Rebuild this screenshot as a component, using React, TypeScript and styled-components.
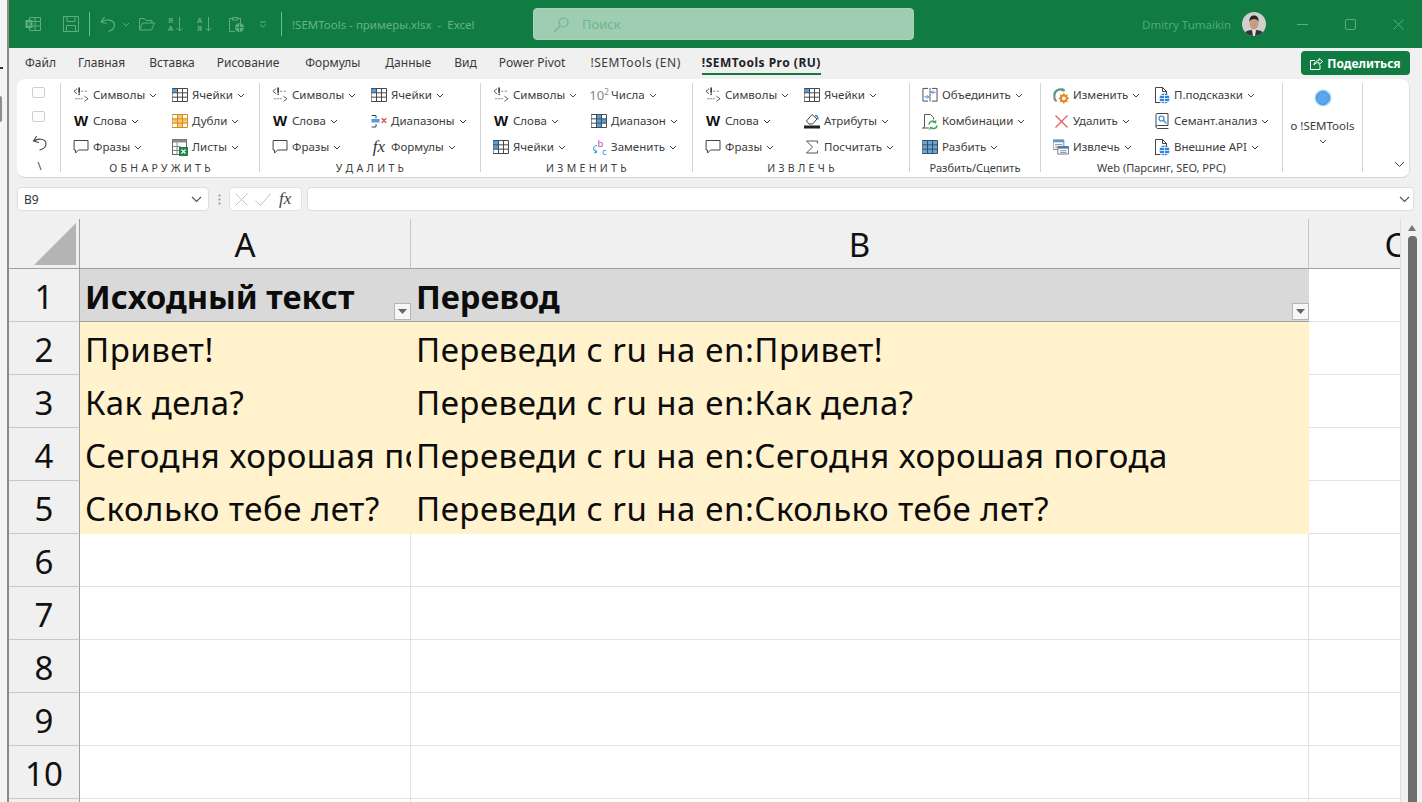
import React from "react";
import styled, { createGlobalStyle } from "styled-components";

const FONT = `"Noto Sans", "Open Sans", "Liberation Sans", sans-serif`;

const Global = createGlobalStyle`
  html, body { margin: 0; padding: 0; background: #f0f0f0; overflow: hidden; }
  * { box-sizing: border-box; }
`;

const Page = styled.div`
  width: 1422px; height: 802px; display: flex; overflow: hidden;
  font-family: ${FONT}; background: #f0f0f0;
`;
const DesktopEdge = styled.div`
  width: 9px; flex: none; background: #f3f3f3; border-right: 2px solid #8a8a8a;
  display: flex; flex-direction: column; align-items: flex-start; padding-top: 67px; overflow: hidden;
`;
const EdgeMark = styled.span`
  width: 3px; height: 2px; background: #333;
`;
const EdgeScroll = styled.span`
  width: 2px; height: 26px; margin-top: 27px; background: #8e8e8e; border-radius: 0 2px 2px 0;
`;
const Window = styled.div`
  flex: 1; min-width: 0; display: flex; flex-direction: column; background: #f0f0f0;
`;
const TitleBar = styled.header`
  height: 48px; flex: none; background: #107c41; display: flex; align-items: center;
  position: relative; padding-left: 16px; color: #5cb184;
`;
const Qat = styled.span<{ $ml?: number }>`
  display: flex; align-items: center; margin-left: ${p => p.$ml ?? 0}px;
`;
const QatSep = styled.span<{ $ml: number }>`
  width: 1px; height: 24px; background: #6dbb92; margin-left: ${p => p.$ml}px;
`;
const FileName = styled.span`
  margin-left: 10px; font-size: 11.5px; color: #62b389; white-space: nowrap; width: 241px;
`;
const SearchBox = styled.div`
  width: 381px; height: 32px; background: #9fcdb2; border: 1px solid #a9d2ba; border-radius: 4px;
  display: flex; align-items: center; padding-left: 20px; gap: 13px; color: #6fb48e; font-size: 13px;
`;
const UserName = styled.span`
  margin-left: 228px; width: 100px; font-size: 11.5px; color: #4fab79; white-space: nowrap;
`;
const WinButtons = styled.div`
  display: flex; align-items: center; margin-left: 31px; gap: 37px;
`;
const TabBar = styled.nav`
  height: 30px; flex: none; display: flex; align-items: flex-start; position: relative; padding-left: 16px;
`;
const Tab = styled.span<{ $active?: boolean; $ls?: number; $mr: number }>`
  height: 27px; margin-right: ${p => p.$mr}px;
  font-size: 12px; line-height: 30px; white-space: nowrap; letter-spacing: ${p => p.$ls ?? 0}px;
  color: ${p => p.$active ? "#222" : "#3a3a3a"}; font-weight: ${p => p.$active ? 700 : 400};
  border-bottom: ${p => p.$active ? "2px solid #107c41" : "none"};
`;
const Share = styled.button`
  margin-left: auto; margin-right: 12px; margin-top: 3px; width: 109px; height: 24px; border: 0; border-radius: 4px;
  background: #107c41; color: #fff; font: 700 12px ${FONT}; display: flex; align-items: center; justify-content: center; gap: 4px;
  padding: 0;
`;
const Ribbon = styled.section`
  height: 99px; flex: none; margin: 1px 12px 0 8px; background: #fff; border-radius: 8px;
  border-bottom: 1px solid #d2d2d2; border-right: 1px solid #e0e0e0; display: flex; position: relative; padding-top: 4px;
`;
const Group = styled.div<{ $w: number }>`
  width: ${p => p.$w}px; height: 89px; flex: none; border-right: 1px solid #d4d4d4; display: flex; flex-direction: column;
`;
const FirstCol = styled.div`
  height: 89px; width: 44px; flex: none; border-right: 1px solid #d4d4d4; display: flex; flex-direction: column; align-items: center; padding: 4px 1px 0 0;
`;
const Check = styled.span`
  width: 13px; height: 13px; border: 1px solid #cfcfcf; border-radius: 2px; margin: 0 0 13px;
  background: #fdfdfd;
`;
const UndoWrap = styled.span`
  display: flex; margin-left: 4px;
`;
const Slash = styled.span`
  font-size: 11px; line-height: 12px; color: #444; margin: 8px 0 0 3px;
`;
const Cols = styled.div<{ $cols: string }>`
  display: grid; grid-template-columns: ${p => p.$cols}; padding-left: 12px; height: 76px;
`;
const Col = styled.div`
  display: flex; flex-direction: column; gap: 2px;
`;
const Item = styled.div`
  height: 24px; display: flex; align-items: center; white-space: nowrap;
`;
const IconSlot = styled.span`
  width: 16px; height: 16px; flex: none; margin-right: 4px; display: flex; align-items: center; justify-content: center;
`;
const WordIcon = styled.span`
  font: 900 15px "Liberation Sans", sans-serif; color: #111; line-height: 16px;
`;
const FxIcon = styled.span`
  font: italic 400 17px "Liberation Serif", serif; color: #333; line-height: 16px;
`;
const PowerIcon = styled.span`
  font-size: 13px; color: #888; line-height: 16px; white-space: nowrap;
  sup { font-size: 8px; vertical-align: 5px; line-height: 0; }
`;
const ItemLabel = styled.span`
  font-size: 11.5px; color: #3c3c3c; line-height: 16px;
`;
const CaretSvg = styled.svg`
  margin-left: 4px; flex: none;
`;
const GroupLabel = styled.div<{ $spaced?: boolean }>`
  text-align: center; font-size: ${p => p.$spaced ? 10.5 : 11}px; line-height: 12px; color: #3c3c3c; margin-top: 3px; white-space: nowrap;
  letter-spacing: ${p => p.$spaced ? "0.3px" : "0"};
`;
const AboutGroup = styled.div`
  width: 80px; height: 89px; flex: none; border-right: 1px solid #d4d4d4; display: flex; flex-direction: column; align-items: center; padding-top: 6px;
`;
const AboutLabel = styled.span`
  font-size: 11.5px; color: #3c3c3c; margin-top: 11px; line-height: 16px; white-space: nowrap;
`;
const AboutCaret = styled.span`
  display: flex; margin: 5px 4px 0 0;
`;
const Collapse = styled.span`
  position: absolute; right: 4px; bottom: 9px; display: flex;
`;
const FormulaRow = styled.div`
  height: 24px; flex: none; margin-top: 9px; display: flex; align-items: stretch; padding-left: 8px; padding-right: 8px;
`;
const NameBox = styled.div`
  width: 192px; background: #fff; border: 1px solid #dedede; border-radius: 4px; display: flex; align-items: center; justify-content: space-between;
  padding: 0 6px 0 6px; font-size: 12px; color: #333;
`;
const Dots = styled.span`
  width: 20px; flex: none; display: flex; align-items: center; justify-content: center;
`;
const FxBox = styled.div`
  width: 73px; flex: none; background: #fff; border: 1px solid #e2e2e2; border-radius: 4px; display: flex; align-items: center; gap: 7px; padding-left: 5px;
`;
const FxBoxLabel = styled.span`
  font: italic 400 17px "Liberation Serif", serif; color: #444; margin-left: 1px;
`;
const FormulaInput = styled.div`
  flex: 1; margin-left: 5px; background: #fff; border: 1px solid #dedede; border-radius: 4px; display: flex; align-items: center; justify-content: flex-end; padding-right: 3px;
`;
const SheetArea = styled.main`
  flex: 1; min-height: 0; margin-top: 8px; display: flex; overflow: hidden;
`;
const Sheet = styled.div`
  width: 1391px; flex: none; overflow: hidden; display: grid;
  grid-template-columns: 71px 331px 898px 172px; grid-auto-rows: 53px; grid-template-rows: 50px;
  align-content: start; background: #fff; font-family: ${FONT};
`;
const Corner = styled.div`
  background: #f0f0f0; border-right: 1px solid #a0a0a0; border-bottom: 1px solid #a0a0a0;
  display: flex; align-items: flex-end; justify-content: flex-end; padding: 0 3px 3px 0;
`;
const ColHead = styled.div<{ $last?: boolean }>`
  background: #f0f0f0; border-bottom: 1px solid #a0a0a0; border-right: ${p => p.$last ? "none" : "1px solid #c6c6c6"};
  display: flex; align-items: center; justify-content: center; font-size: 33px; color: #111; padding-top: 1px;
`;
const RowHead = styled.div`
  background: #f0f0f0; border-right: 1px solid #a0a0a0; border-bottom: 1px solid #c8c8c8;
  display: flex; align-items: center; justify-content: center; font-size: 33px; color: #111; padding-top: 2px;
`;
const Cell = styled.div<{ $kind: "head" | "data" | "empty"; $last?: boolean }>`
  position: relative; overflow: hidden; white-space: nowrap; padding: 3px 0 0 5px; display: flex; align-items: center;
  font-size: ${p => p.$kind === "head" ? 32.6 : 33}px; color: #0c0c0c;
  letter-spacing: ${p => p.$kind === "head" ? 0 : 0.48}px;
  font-weight: ${p => p.$kind === "head" ? 700 : 400};
  background: ${p => p.$kind === "head" ? "#d9d9d9" : p.$kind === "data" ? "#fff2cc" : "#fff"};
  border-right: ${p => p.$kind === "empty" ? "1px solid #e2e2e2" : "none"};
  border-bottom: ${p => p.$kind === "head" ? "1px solid #a0a0a0" : p.$kind === "data" ? "1px solid #fff2cc" : "1px solid #e2e2e2"};
`;
const FilterBtn = styled.span`
  position: absolute; right: 0; bottom: 1px; width: 17px; height: 17px; background: #f6f6f6; border: 1px solid #b5b5b5;
  display: flex; align-items: center; justify-content: center;
`;
const ScrollBar = styled.aside`
  width: 22px; flex: none; background: #f1f1f1; border-left: 1px solid #e0e0e0; display: flex; flex-direction: column; align-items: center; padding: 6px 0 0 1px;
`;
const ScrollArrow = styled.span`
  width: 0; height: 0; border-left: 4.5px solid transparent; border-right: 4.5px solid transparent; border-bottom: 6px solid #777;
`;
const ScrollThumb = styled.span`
  width: 9px; flex: 1; margin-top: 5px; background: #6e6e6e; border-radius: 4px 4px 0 0;
`;

const ln = { fill: "none", strokeLinecap: "round" as const, strokeLinejoin: "round" as const };

const GridIcon = ({ fill = "#4ba0e8", cells, stroke = "#4a4a4a" }: { fill?: string; cells: [number, number][]; stroke?: string }) => (
  <svg width="16" height="16" viewBox="0 0 16 16">
    {cells.map(([c, r]) => (
      <rect key={`${c}${r}`} x={0.5 + c * 5} y={1.5 + r * 4.33} width="5" height="4.33" fill={fill} />
    ))}
    <path d="M.5 1.5h15v13H.5zM5.5 1.5v13M10.5 1.5v13M.5 5.83h15M.5 10.17h15" {...ln} stroke={stroke} strokeWidth="1" />
  </svg>
);
const Symbols = () => (
  <svg width="17" height="16" viewBox="0 0 17 16" {...ln} stroke="#555" strokeWidth="1">
    <path d="M4 1.500 1 4l3 2.500" />
    <path d="M6.500 .5v4.500" strokeWidth="1.700" stroke="#333" />
    <path d="M6.500 7v.6" strokeWidth="1.500" stroke="#333" />
    <path d="M9 4h2.500M13 4h2M2.500 12h1.500M5.500 12h1.500M8.500 12h1.500" stroke="#888" strokeDasharray="1.500 1" />
    <path d="m12.500 9.500 3.500 2.500-3.500 2.500" />
  </svg>
);
const Bubble = () => (
  <svg width="16" height="16" viewBox="0 0 16 16" {...ln} stroke="#444" strokeWidth="1">
    <path d="M1.500 1.500h13.500v9.500H5.500l-3 3v-3h-1z" />
  </svg>
);
const Sheets = () => (
  <svg width="16" height="17" viewBox="0 0 16 17">
    <rect x=".5" y=".5" width="14" height="15" fill="#fff" stroke="#666" />
    <rect x=".5" y=".5" width="14" height="3" fill="#8a8a8a" />
    <path d="M.5 7.500h8M.5 11.500h8M5 3.500v12" stroke="#888" />
    <rect x="7" y="8" width="9" height="9" fill="#1e8449" />
    <path d="m9.500 10.500 4 4M13.500 10.500l-4 4" stroke="#fff" strokeWidth="1.200" />
  </svg>
);
const Ranges = () => (
  <svg width="16" height="16" viewBox="0 0 16 16" {...ln}>
    <path d="M1 2.500h4v2.500M1 14h4v-2.500" stroke="#444" />
    <rect x=".5" y="6" width="8" height="3.500" fill="#4ba0e8" />
    <path d="m11 5.500 4 4M15 5.500l-4 4" stroke="#e04a4a" strokeWidth="1.200" />
  </svg>
);
const Replace = () => (
  <svg width="16" height="18" viewBox="0 0 16 18">
    <text x="6.500" y="8.500" fontSize="9.500" fontFamily="Noto Sans" fill="#b14fc5">b</text>
    <text x="11" y="16.500" fontSize="9.500" fontFamily="Noto Sans" fill="#2f9ad6">c</text>
    <path d="M6 7.500C2 7.500 1 12 5.500 14M4 11.500l2 2.500-3 1" fill="none" stroke="#2f9ad6" />
  </svg>
);
const Bucket = () => (
  <svg width="16" height="16" viewBox="0 0 16 16">
    <path d="M2.500 8 8 1.500l5 4.500-4.500 5H5z" fill="#fff" stroke="#444" />
    <path d="M11 2.500c2 0 3 1.500 3 4" fill="none" stroke="#2f7fd0" strokeWidth="1.300" />
    <rect x="0" y="12.500" width="16" height="3" fill="#222" />
  </svg>
);
const Sigma = () => (
  <svg width="14" height="14" viewBox="0 0 14 14" {...ln} stroke="#555" strokeWidth="1">
    <path d="M12.500 3V1H1.500l6 6-6 6h11v-2" />
  </svg>
);
const Merge = () => (
  <svg width="17" height="16" viewBox="0 0 17 16" {...ln}>
    <path d="M6 1H1v13.500h5M11 1h5v13.500h-5" stroke="#444" />
    <path d="M8.500 1v13.500" stroke="#444" strokeDasharray="2 1" />
    <path d="M14 5H10M11.500 3.500 10 5l1.500 1.500M3 10h4M5.500 8.500 7 10l-1.500 1.500" stroke="#2f86d6" />
  </svg>
);
const Combos = () => (
  <svg width="16" height="17" viewBox="0 0 16 17" {...ln}>
    <path d="M2.500 13V1.500h6l3 3V6M2.500 13.500c0 1.500-1 1.500-2 1.500h6" stroke="#555" fill="none" />
    <path d="M7 11c.5-3 4.500-4 6.500-1.500M15 13c-.5 2.500-4.500 3.500-6.500 1.500" stroke="#3aa55c" strokeWidth="1.500" fill="none" />
    <path d="m13.800 7.500-.2 2.300-2.300-.2M7.500 17l.8-2.500 2.200.5" stroke="#3aa55c" fill="none" />
  </svg>
);
const WebEdit = () => (
  <svg width="17" height="17" viewBox="0 0 17 17" {...ln}>
    <path d="M1.500 9c-.5-5 5-9 10-6" stroke="#5c9a7d" strokeWidth="2.400" fill="none" />
    <path d="M3 14c-1-.8-1.500-2-1.500-3.500" stroke="#7f8f88" strokeWidth="2.400" fill="none" />
    <path d="m10 0 3 3.500-4 .8z" fill="#5c9a7d" />
    <circle cx="11.500" cy="11.500" r="3.200" fill="none" stroke="#e8871e" strokeWidth="2.400" />
    <path d="M11.500 6.500v1.500M11.500 15v1.500M6.500 11.500H8M15 11.500h1.500M8 8l1 1M14 14l1 1M15 8l-1 1M9 14l-1 1" stroke="#e8871e" strokeWidth="1.400" />
  </svg>
);
const RedX = () => (
  <svg width="15" height="15" viewBox="0 0 15 15"><path d="m1.500 1.500 12 12M13.500 1.500l-12 12" stroke="#e25b5b" strokeWidth="1.200" fill="none" /></svg>
);
const Extract = () => (
  <svg width="17" height="16" viewBox="0 0 17 16" {...ln}>
    <rect x=".5" y=".5" width="11" height="10" fill="#fff" stroke="#6b7c8c" />
    <rect x=".5" y=".5" width="11" height="2.500" fill="#5b96cc" />
    <path d="M2.500 5.500h7M2.500 8h5" stroke="#888" />
    <rect x="5.500" y="7.500" width="11" height="8" fill="#fff" stroke="#6b7c8c" />
    <rect x="5.500" y="7.500" width="11" height="2.200" fill="#3b78b5" />
    <path d="M8 12h6M8 14h6" stroke="#888" />
  </svg>
);
const DocGlobe = () => (
  <svg width="16" height="17" viewBox="0 0 16 17" {...ln}>
    <path d="M1.500 15.500V.5h7l4 4V7M8.500.500v4h4M1.500 15.500H6" stroke="#444" fill="#fff" />
    <circle cx="10.500" cy="11.500" r="5" fill="#2b87d6" />
    <path d="M5.500 11.500h10M10.500 6.500v10M7 8.500h7M7 14.500h7" stroke="#fff" strokeWidth=".8" />
  </svg>
);
const BookLens = () => (
  <svg width="14" height="16" viewBox="0 0 14 16" {...ln}>
    <path d="M1 13.500V1.500C1 1 1.500.5 2 .5h11v12H2.500C1.500 12.500 1 13 1 13.500s.5 2 1.500 2H13" fill="none" stroke="#444" />
    <circle cx="6.500" cy="5.500" r="2.500" fill="#fff" stroke="#2b87d6" strokeWidth="1.200" />
    <path d="m8.500 7.500 2.500 2.500" stroke="#2b87d6" strokeWidth="1.300" />
  </svg>
);
const UndoSmall = () => (
  <svg width="16" height="17" viewBox="0 0 16 17" {...ln} stroke="#444" strokeWidth="1.100">
    <path d="M4.500 1.500 1.500 6l5 1.500M2 6c4-3 12-2.500 12 3 0 3-3 5-6 6" />
  </svg>
);

const splitCells: [number, number][] = [[0, 0], [1, 0], [2, 0], [0, 1], [1, 1], [2, 1], [0, 2], [1, 2], [2, 2]];
const icons: Record<string, React.ReactNode> = {
  sym: <Symbols />,
  word: <WordIcon>W</WordIcon>,
  bubble: <Bubble />,
  cells: <GridIcon cells={[[0, 0]]} />,
  dup: <GridIcon fill="#f7c66f" stroke="#d08c1e" cells={[[0, 1], [1, 1], [2, 1], [1, 0], [1, 2]]} />,
  sheets: <Sheets />,
  ranges: <Ranges />,
  fx: <FxIcon>fx</FxIcon>,
  pow: <PowerIcon>10<sup>2</sup></PowerIcon>,
  range: <GridIcon cells={[[1, 0], [1, 1], [1, 2], [2, 1]]} />,
  leftcells: <GridIcon cells={[[0, 1], [0, 0]]} />,
  replace: <Replace />,
  bucket: <Bucket />,
  sigma: <Sigma />,
  merge: <Merge />,
  combos: <Combos />,
  split: <GridIcon cells={splitCells} fill="#5aaae8" />,
  webedit: <WebEdit />,
  redx: <RedX />,
  extract: <Extract />,
  docglobe: <DocGlobe />,
  book: <BookLens />,
};

const Caret = () => (
  <CaretSvg width="8" height="5" viewBox="0 0 8 5"><path d="m1 1 3 3 3-3" fill="none" stroke="#444" strokeWidth="1" /></CaretSvg>
);

type G = { w: number; cols: string; label: string; spaced?: boolean; items: [string, string][][] };
const groups: G[] = [
  { w: 199, cols: "99px 1fr", label: "О Б Н А Р У Ж И Т Ь", spaced: true, items: [
    [["sym", "Символы"], ["word", "Слова"], ["bubble", "Фразы"]],
    [["cells", "Ячейки"], ["dup", "Дубли"], ["sheets", "Листы"]] ] },
  { w: 221, cols: "99px 1fr", label: "У Д А Л И Т Ь", spaced: true, items: [
    [["sym", "Символы"], ["word", "Слова"], ["bubble", "Фразы"]],
    [["cells", "Ячейки"], ["ranges", "Диапазоны"], ["fx", "Формулы"]] ] },
  { w: 212, cols: "98px 1fr", label: "И З М Е Н И Т Ь", spaced: true, items: [
    [["sym", "Символы"], ["word", "Слова"], ["leftcells", "Ячейки"]],
    [["pow", "Числа"], ["range", "Диапазон"], ["replace", "Заменить"]] ] },
  { w: 217, cols: "99px 1fr", label: "И З В Л Е Ч Ь", spaced: true, items: [
    [["sym", "Символы"], ["word", "Слова"], ["bubble", "Фразы"]],
    [["cells", "Ячейки"], ["bucket", "Атрибуты"], ["sigma", "Посчитать"]] ] },
  { w: 131, cols: "1fr", label: "Разбить/Сцепить", items: [
    [["merge", "Объединить"], ["combos", "Комбинации"], ["split", "Разбить"]] ] },
  { w: 242, cols: "101px 1fr", label: "Web (Парсинг, SEO, PPC)", items: [
    [["webedit", "Изменить"], ["redx", "Удалить"], ["extract", "Извлечь"]],
    [["docglobe", "П.подсказки"], ["book", "Семант.анализ"], ["docglobe", "Внешние API"]] ] },
];

const tabs: [string, number][] = [
  ["Файл", 22], ["Главная", 24], ["Вставка", 22], ["Рисование", 26], ["Формулы", 25],
  ["Данные", 23], ["Вид", 22], ["Power Pivot", 25],
];

const rows: [string, string, string][] = [
  ["1", "Исходный текст", "Перевод"],
  ["2", "Привет!", "Переведи с ru на en:Привет!"],
  ["3", "Как дела?", "Переведи с ru на en:Как дела?"],
  ["4", "Сегодня хорошая погода", "Переведи с ru на en:Сегодня хорошая погода"],
  ["5", "Сколько тебе лет?", "Переведи с ru на en:Сколько тебе лет?"],
  ["6", "", ""], ["7", "", ""], ["8", "", ""], ["9", "", ""], ["10", "", ""], ["11", "", ""],
];

const Filter = () => (
  <FilterBtn>
    <svg width="9" height="5" viewBox="0 0 9 5"><path d="M0 0h9L4.500 5z" fill="#666" /></svg>
  </FilterBtn>
);

const c = "#5cae82";
const Avatar = () => (
  <svg width="24" height="24" viewBox="0 0 24 24">
    <circle cx="12" cy="12" r="12" fill="#cfd0ce" />
    <clipPath id="av"><circle cx="12" cy="12" r="12" /></clipPath>
    <g clipPath="url(#av)">
      <path d="M2 25c0-6 4-7 10-7s10 1 10 7z" fill="#2f3436" />
      <path d="M10 18h4l-1 6h-2z" fill="#e8e4e0" />
      <ellipse cx="12" cy="11.500" rx="4.500" ry="6" fill="#c99a84" />
      <path d="M7.500 10c-.5-5 2-6.500 4.500-6.500s5 1.500 4.500 6.500c-.5-2-2-3-4.500-3s-4 1-4.500 3z" fill="#2a2320" />
    </g>
  </svg>
);

export default function App() {
  return (
    <Page>
      <Global />
      <DesktopEdge>
        <EdgeMark />
        <EdgeScroll />
      </DesktopEdge>
      <Window>
        <TitleBar>
          <Qat>
            <svg width="16" height="16" viewBox="0 0 16 16" fill="none" stroke={c}>
              <path d="M4.500 1.500h11v13h-11zM10 1.500v13M4.500 5.500h11M4.500 10h11" />
              <rect x=".5" y="4" width="7" height="8" fill={c} stroke="none" />
              <path d="m2.500 6 3 4M5.500 6l-3 4" stroke="#107c41" />
            </svg>
          </Qat>
          <Qat $ml={22}>
            <svg width="16" height="16" viewBox="0 0 16 16" fill="none" stroke={c}>
              <path d="M.5.500h15v15H.500zM4 .5v5h8v-5M3.500 15.500V9.500h9v6" />
            </svg>
          </Qat>
          <QatSep $ml={10} />
          <Qat $ml={10}>
            <svg width="16" height="16" viewBox="0 0 16 16" fill="none" stroke={c} strokeWidth="1.200">
              <path d="M4.500 1 1 6l5.500 1.500M1.500 6C5 3 14 3 14.500 9c0 3-3 5.500-6 6.500" />
            </svg>
          </Qat>
          <Qat $ml={6}>
            <svg width="8" height="5" viewBox="0 0 8 5" fill="none" stroke={c}><path d="m1 1 3 3 3-3" /></svg>
          </Qat>
          <Qat $ml={9}>
            <svg width="16" height="14" viewBox="0 0 16 14" fill="none" stroke={c}>
              <path d="M.5 13V1.500h5l1.500 2h6V6M.5 13l3-7h12l-3 7z" />
            </svg>
          </Qat>
          <Qat $ml={13}>
            <svg width="16" height="16" viewBox="0 0 16 16" fill="none" stroke={c}>
              <text x="0" y="7" fontSize="7.500" fontWeight="700" fontFamily="Noto Sans" fill={c} stroke="none">Я</text>
              <text x="0" y="15" fontSize="7.500" fontWeight="700" fontFamily="Noto Sans" fill={c} stroke="none">А</text>
              <path d="M11.500 1v14M8.500 12l3 3 3-3" />
            </svg>
          </Qat>
          <Qat $ml={13}>
            <svg width="16" height="16" viewBox="0 0 16 16" fill="none" stroke={c}>
              <text x="0" y="7" fontSize="7.500" fontWeight="700" fontFamily="Noto Sans" fill={c} stroke="none">А</text>
              <text x="0" y="15" fontSize="7.500" fontWeight="700" fontFamily="Noto Sans" fill={c} stroke="none">Я</text>
              <path d="M11.500 1v14M8.500 12l3 3 3-3" />
            </svg>
          </Qat>
          <Qat $ml={15}>
            <svg width="16" height="16" viewBox="0 0 16 16" fill="none" stroke={c}>
              <path d="M5 2.500H1.500v13H7M10 2.500h2.500V7M4.500 4V1.500h5V4z" />
              <circle cx="11.500" cy="11.500" r="4" fill={c} />
              <path d="M7.500 11.500h8M11.500 7.500v8" stroke="#107c41" strokeWidth=".8" />
            </svg>
          </Qat>
          <Qat $ml={15}>
            <svg width="8" height="7" viewBox="0 0 8 7" fill="none" stroke={c}><path d="M1 1h6M1 3.500l3 2.500 3-2.500" /></svg>
          </Qat>
          <QatSep $ml={14} />
          <FileName>!SEMTools - примеры.xlsx&nbsp; - &nbsp;Excel</FileName>
          <SearchBox>
            <svg width="15" height="15" viewBox="0 0 15 15" fill="none" stroke="#6fb48e" strokeWidth="1.200"><circle cx="9.500" cy="5.500" r="4.500" /><path d="m6 9-5.500 5.500" /></svg>
            Поиск
          </SearchBox>
          <UserName>Dmitry Tumaikin</UserName>
          <Avatar />
          <WinButtons>
            <svg width="11" height="11" viewBox="0 0 11 11" stroke={c} fill="none"><path d="M0 5.500h11" /></svg>
            <svg width="11" height="11" viewBox="0 0 11 11" stroke={c} fill="none"><rect x=".5" y=".5" width="10" height="10" rx="1.500" /></svg>
            <svg width="11" height="11" viewBox="0 0 11 11" stroke={c} fill="none"><path d="m.5.500 10 10M10.500.500l-10 10" /></svg>
          </WinButtons>
        </TitleBar>
        <TabBar>
          {tabs.map(([t, mr]) => <Tab key={t} $mr={mr}>{t}</Tab>)}
          <Tab $ls={0.55} $mr={21}>!SEMTools (EN)</Tab>
          <Tab $active $ls={0.5} $mr={0}>!SEMTools Pro (RU)</Tab>
          <Share>
            <svg width="13" height="13" viewBox="0 0 13 13" fill="none" stroke="#fff"><path d="M5 3.500H.5v9h9.500V8M4 8c0-3 3-4.500 5-4.500V1.500l3.500 3-3.500 3V5.500C7 5.500 5 6 4 8z" /></svg>
            Поделиться
          </Share>
        </TabBar>
        <Ribbon>
          <FirstCol>
            <Check />
            <Check />
            <UndoWrap><UndoSmall /></UndoWrap>
            <Slash>\</Slash>
          </FirstCol>
          {groups.map(g => (
            <Group key={g.label} $w={g.w}>
              <Cols $cols={g.cols}>
                {g.items.map((col, i) => (
                  <Col key={i}>
                    {col.map(([ic, label]) => (
                      <Item key={label}>
                        <IconSlot>{icons[ic]}</IconSlot>
                        <ItemLabel>{label}</ItemLabel>
                        <Caret />
                      </Item>
                    ))}
                  </Col>
                ))}
              </Cols>
              <GroupLabel $spaced={g.spaced}>{g.label}</GroupLabel>
            </Group>
          ))}
          <AboutGroup>
            <svg width="18" height="18" viewBox="0 0 18 18"><circle cx="9" cy="9" r="8.500" fill="#a9d3f2" /><circle cx="9" cy="9" r="6.500" fill="#5ba7ee" stroke="#3f8fdc" /></svg>
            <AboutLabel>о !SEMTools</AboutLabel>
            <AboutCaret><Caret /></AboutCaret>
          </AboutGroup>
          <Collapse>
            <svg width="11" height="7" viewBox="0 0 11 7" fill="none" stroke="#444"><path d="m1 1 4.500 4.500L10 1" /></svg>
          </Collapse>
        </Ribbon>
        <FormulaRow>
          <NameBox>
            B9
            <svg width="11" height="7" viewBox="0 0 11 7" fill="none" stroke="#555" strokeWidth="1.200"><path d="m1 1 4.500 4.500L10 1" /></svg>
          </NameBox>
          <Dots>
            <svg width="3" height="11" viewBox="0 0 3 11" fill="#888"><circle cx="1.500" cy="1.500" r="1" /><circle cx="1.500" cy="5.500" r="1" /><circle cx="1.500" cy="9.500" r="1" /></svg>
          </Dots>
          <FxBox>
            <svg width="13" height="13" viewBox="0 0 13 13" stroke="#c4c4c4" fill="none"><path d="m.5.500 12 12M12.500.500l-12 12" /></svg>
            <svg width="16" height="13" viewBox="0 0 16 13" stroke="#c4c4c4" fill="none"><path d="m.5 7.500 5 5 10-12" /></svg>
            <FxBoxLabel>fx</FxBoxLabel>
          </FxBox>
          <FormulaInput>
            <svg width="11" height="7" viewBox="0 0 11 7" fill="none" stroke="#555" strokeWidth="1.200"><path d="m1 1 4.500 4.500L10 1" /></svg>
          </FormulaInput>
        </FormulaRow>
        <SheetArea>
          <Sheet>
            <Corner>
              <svg width="42" height="42" viewBox="0 0 42 42"><path d="M42 0v42H0z" fill="#b4b4b4" /></svg>
            </Corner>
            <ColHead>A</ColHead>
            <ColHead>B</ColHead>
            <ColHead $last>C</ColHead>
            {rows.map(([n, a, b], i) => {
              const kind = i === 0 ? "head" : i < 5 ? "data" : "empty";
              return (
                <React.Fragment key={n}>
                  <RowHead>{n}</RowHead>
                  <Cell $kind={kind}>{a}{i === 0 && <Filter />}</Cell>
                  <Cell $kind={kind}>{b}{i === 0 && <Filter />}</Cell>
                  <Cell $kind="empty" />
                </React.Fragment>
              );
            })}
          </Sheet>
          <ScrollBar>
            <ScrollArrow />
            <ScrollThumb />
          </ScrollBar>
        </SheetArea>
      </Window>
    </Page>
  );
}
